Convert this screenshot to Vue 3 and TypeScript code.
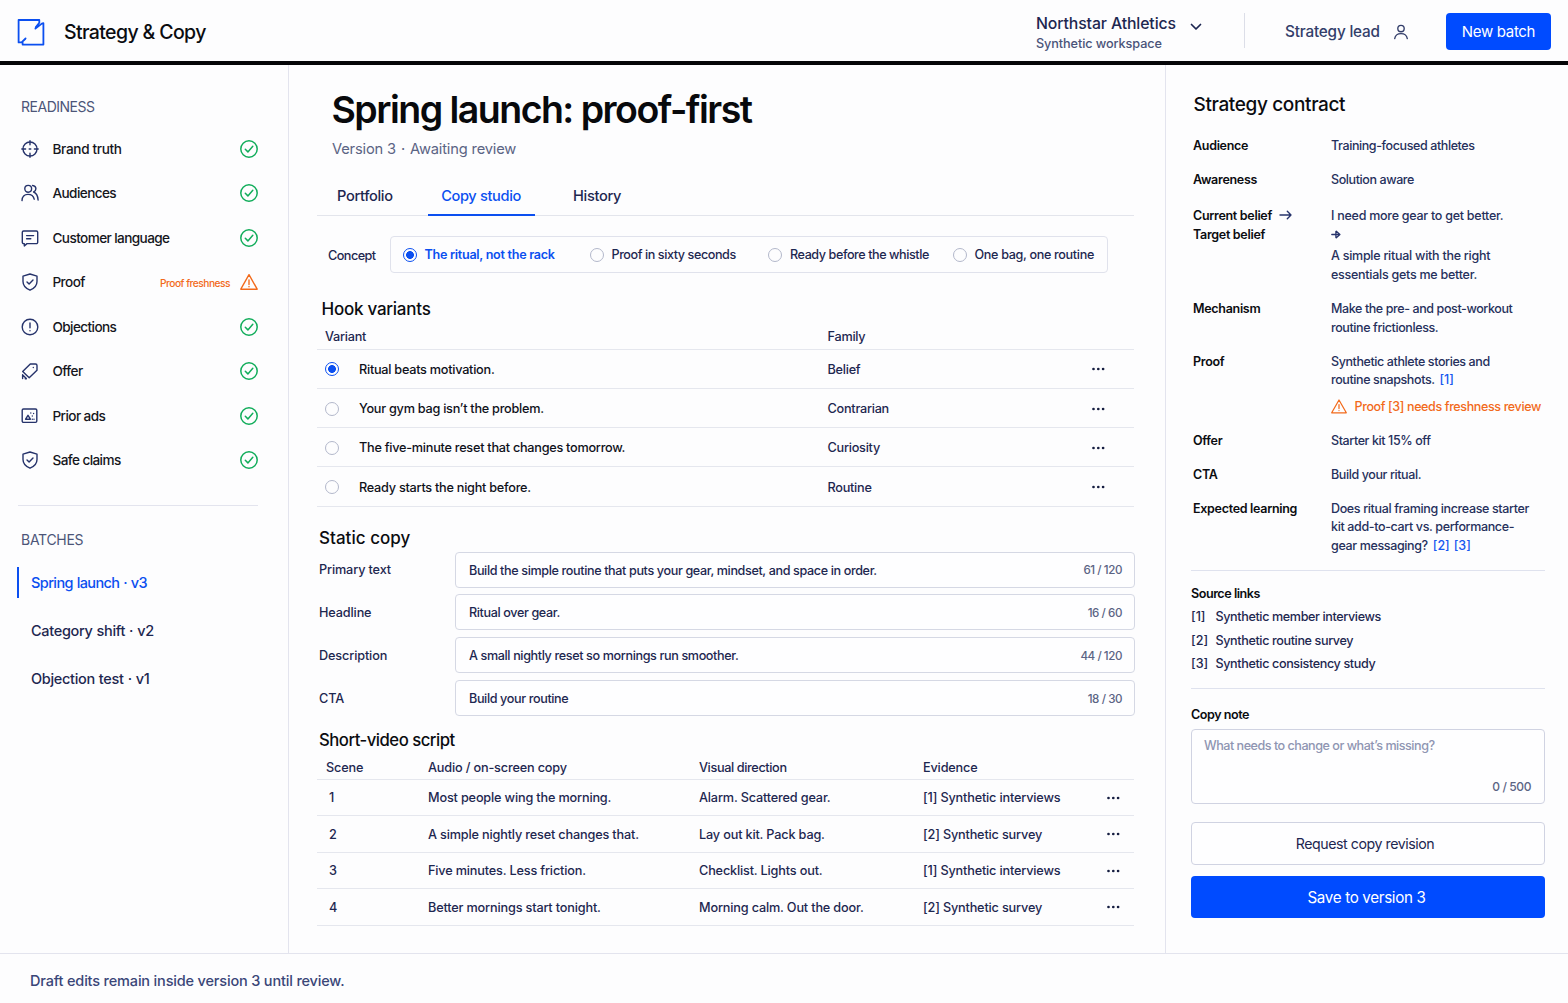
<script setup lang="ts">
import { ref } from 'vue'

interface ReadinessItem { label: string; icon: string; warning?: string; wide?: boolean }
interface Hook { text: string; family: string }

const readiness: ReadinessItem[] = [
  { label: 'Brand truth', icon: 'target', wide: true },
  { label: 'Audiences', icon: 'users' },
  { label: 'Customer language', icon: 'message' },
  { label: 'Proof', icon: 'shield', warning: 'Proof freshness' },
  { label: 'Objections', icon: 'alert' },
  { label: 'Offer', icon: 'tag' },
  { label: 'Prior ads', icon: 'image' },
  { label: 'Safe claims', icon: 'shield' },
]
const batches = ['Spring launch · v3', 'Category shift · v2', 'Objection test · v1']
const tabs = ['Portfolio', 'Copy studio', 'History']
const concepts = ['The ritual, not the rack', 'Proof in sixty seconds', 'Ready before the whistle', 'One bag, one routine']
const hooks: Hook[] = [
  { text: 'Ritual beats motivation.', family: 'Belief' },
  { text: 'Your gym bag isn’t the problem.', family: 'Contrarian' },
  { text: 'The five-minute reset that changes tomorrow.', family: 'Curiosity' },
  { text: 'Ready starts the night before.', family: 'Routine' },
]
const fields = [
  { label: 'Primary text', value: 'Build the simple routine that puts your gear, mindset, and space in order.', count: '61 / 120' },
  { label: 'Headline', value: 'Ritual over gear.', count: '16 / 60' },
  { label: 'Description', value: 'A small nightly reset so mornings run smoother.', count: '44 / 120' },
  { label: 'CTA', value: 'Build your routine', count: '18 / 30' },
]
const scenes = [
  { copy: 'Most people wing the morning.', visual: 'Alarm. Scattered gear.', evidence: '[1] Synthetic interviews' },
  { copy: 'A simple nightly reset changes that.', visual: 'Lay out kit. Pack bag.', evidence: '[2] Synthetic survey' },
  { copy: 'Five minutes. Less friction.', visual: 'Checklist. Lights out.', evidence: '[1] Synthetic interviews' },
  { copy: 'Better mornings start tonight.', visual: 'Morning calm. Out the door.', evidence: '[2] Synthetic survey' },
]
const sources = ['Synthetic member interviews', 'Synthetic routine survey', 'Synthetic consistency study']

const activeBatch = ref(0)
const activeTab = ref(1)
const concept = ref(0)
const hook = ref(0)
</script>

<template>
  <div class="app">
    <header class="topbar">
      <svg class="logo" width="28" height="28" viewBox="0 0 28 28" fill="none" stroke="#0b4ff0" stroke-width="1.8" stroke-linecap="round" stroke-linejoin="round">
        <path d="M22.3 4.800V2H1.600v22.400h3l4-4M5.600 24.500v2.100h20.800V5.200l-1.600.4-6.400 5M22.300 4.800l-3.600 4.600M4.600 24.400l3.600-3.300" />
      </svg>
      <div class="brand">Strategy &amp; Copy</div>
      <div class="workspace">
        <div>
          <div class="ws-name">Northstar Athletics</div>
          <div class="ws-sub">Synthetic workspace</div>
        </div>
        <svg width="12" height="8" viewBox="0 0 12 8" fill="none" stroke="#1b2550" stroke-width="1.7" stroke-linecap="round" stroke-linejoin="round"><path d="M1.5 1.5 6 6l4.500-4.500" /></svg>
      </div>
      <div class="role">
        <span>Strategy lead</span>
        <svg width="16" height="16" viewBox="0 0 16 16" fill="none" stroke="#333e6a" stroke-width="1.35" stroke-linecap="round"><circle cx="8" cy="4.500" r="3.200" /><path d="M1.700 14.600c.5-3.200 2.900-5 6.300-5s5.800 1.800 6.300 5" /></svg>
      </div>
      <button class="primary new">New batch</button>
    </header>

    <div class="body">
      <aside class="side">
        <h4>READINESS</h4>
        <ul class="ready">
          <li v-for="item in readiness" :key="item.label">
            <svg class="ico" width="18" height="18" viewBox="0 0 18 18" fill="none" stroke="#26336b" stroke-width="1.4" stroke-linecap="round" stroke-linejoin="round">
              <template v-if="item.icon === 'target'">
                <circle cx="9" cy="9" r="7" /><path d="M9 .8v4M9 13.200v4M.8 9h3.800M13.400 9h3.800M8.200 9h1.600" />
              </template>
              <template v-else-if="item.icon === 'users'">
                <circle cx="7.200" cy="4.800" r="3.400" /><path d="M1 16.600c.2-4 2.600-6.200 6-6.200s5.600 2 6.200 4.800M11.600 1.500c2.200.3 3.300 1.600 3.300 3.300 0 1.500-.9 2.700-2.300 3.200 2.500.9 4.200 3.600 4.500 8" />
              </template>
              <template v-else-if="item.icon === 'message'">
                <path d="M2.600 2h12.800a1.300 1.300 0 0 1 1.300 1.300v10a1.300 1.300 0 0 1-1.300 1.300H6L3.300 16.900v-2.300h-.7a1.300 1.300 0 0 1-1.300-1.300v-10A1.300 1.300 0 0 1 2.600 2zM5.600 6.600h7M5.600 9.800h4.200" />
              </template>
              <template v-else-if="item.icon === 'shield'">
                <path d="M9 1l7 2.200v5.300c0 4-2.600 6.900-7 8.700-4.400-1.800-7-4.700-7-8.700V3.200zM6 9l2.100 2.100 3.900-4" />
              </template>
              <template v-else-if="item.icon === 'alert'">
                <circle cx="9" cy="9" r="7.800" /><path d="M9 5v4.700M9 12.600v.2" />
              </template>
              <template v-else-if="item.icon === 'tag'">
                <path d="M1.700 9.600 9.300 2h5.200a1.500 1.500 0 0 1 1.500 1.500v4.700l-7.800 7.600zM12.300 5.500v.1M1.600 12.800v3.800M1.700 13l3.600 3.600M4.200 16.700h1.200" />
              </template>
              <template v-else>
                <rect x="1.200" y="2" width="14.600" height="13.400" rx="1.300" /><path d="M4.600 12.200 7 8.300l2.400 3.900zM11.300 9v.1M11.300 12.200v-.1M13 12.200v-.1M9.800 6v.1M12.600 6.500v.1" />
              </template>
            </svg>
            <span class="name" :class="{ wide: item.wide }">{{ item.label }}</span>
            <span v-if="item.warning" class="fresh">{{ item.warning }}</span>
            <svg v-if="item.warning" width="18" height="18" viewBox="0 0 18 18" fill="none" stroke="#f26a1b" stroke-width="1.35" stroke-linejoin="round" stroke-linecap="round"><path d="M9 1.600 17.200 16.200H.8zM9 6.800v4.600M9 13.500v.2" /></svg>
            <svg v-else width="18" height="18" viewBox="0 0 18 18" fill="none" stroke="#12ad5b" stroke-width="1.5" stroke-linecap="round" stroke-linejoin="round"><circle cx="9" cy="9" r="8.200" /><path d="M5.300 9.300 7.900 11.900 12.800 6.300" /></svg>
          </li>
        </ul>
        <h4 class="bt">BATCHES</h4>
        <ul class="batches">
          <li v-for="(b, i) in batches" :key="b" :class="{ on: i === activeBatch }" @click="activeBatch = i">{{ b }}</li>
        </ul>
      </aside>

      <main class="main">
        <h1>Spring launch: proof-first</h1>
        <p class="meta">Version 3 <i>·</i> Awaiting review</p>
        <nav class="tabs">
          <a v-for="(t, i) in tabs" :key="t" :class="{ on: i === activeTab }" @click="activeTab = i">{{ t }}</a>
        </nav>
        <div class="concept">
          <span class="clabel">Concept</span>
          <div class="options">
            <label v-for="(c, i) in concepts" :key="c" :class="{ on: i === concept }" @click="concept = i">
              <span class="radio" :class="{ on: i === concept }"></span>{{ c }}
            </label>
          </div>
        </div>

        <h2 class="h-hook">Hook variants</h2>
        <div class="hooks">
          <div class="row head"><span>Variant</span><span></span><span>Family</span></div>
          <div v-for="(h, i) in hooks" :key="h.text" class="row">
            <span class="radio" :class="{ on: i === hook }" @click="hook = i"></span>
            <span class="ink">{{ h.text }}</span>
            <span>{{ h.family }}</span>
            <svg class="dots" width="14" height="4" viewBox="0 0 14 4"><circle cx="2.500" cy="2" r="1.350" /><circle cx="7.300" cy="2" r="1.350" /><circle cx="12.100" cy="2" r="1.350" /></svg>
          </div>
        </div>

        <h2 class="h-static">Static copy</h2>
        <div class="fields">
          <template v-for="f in fields" :key="f.label">
            <span class="flabel">{{ f.label }}</span>
            <div class="field"><span>{{ f.value }}</span><span class="count">{{ f.count }}</span></div>
          </template>
        </div>

        <h2 class="h-script">Short-video script</h2>
        <div class="script">
          <div class="row head"><span>Scene</span><span>Audio / on-screen copy</span><span class="vd">Visual direction</span><span>Evidence</span></div>
          <div v-for="(s, i) in scenes" :key="s.copy" class="row">
            <span class="num">{{ i + 1 }}</span>
            <span>{{ s.copy }}</span>
            <span>{{ s.visual }}</span>
            <span>{{ s.evidence }}</span>
            <svg class="dots" width="14" height="4" viewBox="0 0 14 4"><circle cx="2.500" cy="2" r="1.350" /><circle cx="7.300" cy="2" r="1.350" /><circle cx="12.100" cy="2" r="1.350" /></svg>
          </div>
        </div>
      </main>

      <aside class="contract">
        <h3>Strategy contract</h3>
        <dl>
          <dt>Audience</dt><dd>Training-focused athletes</dd>
          <dt>Awareness</dt><dd>Solution aware</dd>
          <dt class="belief">Current belief
            <svg width="13" height="10" viewBox="0 0 13 10" fill="none" stroke="#26336b" stroke-width="1.4" stroke-linecap="round" stroke-linejoin="round"><path d="M1 5h11M8.300 1.300 12 5 8.300 8.700" /></svg>
            <br>Target belief</dt>
          <dd class="belief">
            <span class="loose">I need more gear to get better.</span><br>
            <svg class="arrow" width="10" height="9" viewBox="0 0 10 9" fill="none" stroke="#26336b" stroke-width="1.300" stroke-linecap="round" stroke-linejoin="round"><path d="M.8 4.500h8M5.300 1.200 8.900 4.500 5.300 7.800M4.900 1.500v6" /></svg>
            <div class="after">A simple ritual with the right<br>essentials gets me better.</div>
          </dd>
          <dt>Mechanism</dt><dd>Make the pre- and post-workout<br>routine frictionless.</dd>
          <dt>Proof</dt>
          <dd>Synthetic athlete stories and<br>routine snapshots. <a class="first">[1]</a>
            <div class="warn">
              <svg width="16" height="15" viewBox="0 0 16 15" fill="none" stroke="#f26a1b" stroke-width="1.250" stroke-linejoin="round" stroke-linecap="round"><path d="M8 1 15.300 13.800H.7zM8 5.600v4M8 11.500v.1" /></svg>
              Proof [3] needs freshness review
            </div>
          </dd>
          <dt>Offer</dt><dd>Starter kit 15% off</dd>
          <dt>CTA</dt><dd>Build your ritual.</dd>
          <dt>Expected learning</dt><dd class="learn">Does ritual framing increase starter<br>kit add-to-cart vs. performance-<br>gear messaging? <a>[2]</a> <a class="n">[3]</a></dd>
        </dl>
        <section class="sources">
          <h5>Source links</h5>
          <div v-for="(s, i) in sources" :key="s" class="src"><span>[{{ i + 1 }}]</span>{{ s }}</div>
        </section>
        <section class="note">
          <h5>Copy note</h5>
          <div class="area">
            <span>What needs to change or what’s missing?</span>
            <span class="limit">0 / 500</span>
          </div>
          <button class="secondary">Request copy revision</button>
          <button class="primary save">Save to version 3</button>
        </section>
      </aside>
    </div>

    <footer>Draft edits remain inside version 3 until review.</footer>
  </div>
</template>

<style>
body { background: #fdfdfe; }
</style>

<style scoped>
* { box-sizing: border-box; margin: 0; padding: 0; }
.app { width: 1568px; height: 1003px; display: flex; flex-direction: column; overflow: hidden; font-family: Inter, "Liberation Sans", sans-serif; font-size: 12.7px; font-weight: 450; color: #1d2750; background: #fdfdfe; }
svg { flex: none; display: block; }
ul { list-style: none; }
button { font-family: inherit; border-radius: 4px; border: 0; font-weight: 430; }
.primary { background: #004bff; color: #fff; }

.topbar { height: 65px; flex: none; border-bottom: 4px solid #050608; display: flex; align-items: center; padding: 2px 17px 0 17px; }
.brand { margin-left: 19px; width: 972px; font-size: 19.5px; font-weight: 450; letter-spacing: -.62px; color: #0b0c10; white-space: nowrap; }
.workspace { display: flex; width: 209px; height: 35px; border-right: 1px solid #dcdee8; gap: 15px; margin-top: -2px; }
.ws-name { font-size: 15.800px; line-height: 20px; letter-spacing: -.11px; margin-top: 1px; white-space: nowrap; }
.ws-sub { font-size: 12.700px; line-height: 18px; margin-top: 1px; letter-spacing: -.1px; color: #4a5379; white-space: nowrap; }
.workspace svg { margin: 10px 0 0 -.5px; }
.role { display: flex; align-items: center; gap: 13px; margin-left: 40px; width: 161px; font-size: 15.300px; letter-spacing: -.18px; color: #333e6a; }
.new { width: 105px; height: 37px; font-size: 15px; letter-spacing: -.33px; flex: none; }

.body { flex: none; height: 888px; display: grid; grid-template-columns: 289px 877px 402px; }
.side { border-right: 1px solid #e3e4ee; padding: 31px 30px 0 17px; }
h4 { font-size: 14px; line-height: 22px; font-weight: 400; letter-spacing: -.48px; color: #4c5578; padding-left: 4px; }
.ready { margin: 8.500px 0 0 1px; padding: 0 0 22px 2.500px; border-bottom: 1px solid #e3e4ee; }
.ready li { height: 44.500px; display: flex; align-items: center; color: #15161c; font-size: 13.600px; }
.name { margin-left: 14px; flex: 1; letter-spacing: -.6px; }
.name.wide { letter-spacing: -.34px; }
.fresh { font-size: 10.200px; font-weight: 550; letter-spacing: -.5px; color: #f26a1b; margin-right: 10px; padding-top: 1px; }
.bt { margin-top: 23px; letter-spacing: -.28px; }
.batches { padding-top: 16px; }
.batches li { height: 48.200px; display: flex; align-items: center; padding-left: 14px; font-size: 14.500px; letter-spacing: -.32px; word-spacing: .5px; }
.batches li.on { color: #0b4ff0; height: 31px; margin-bottom: 8.500px; border-left: 2px solid #0b4ff0; padding-left: 12px; letter-spacing: -.6px; }

.main { padding: 0 31px 0 28px; border-right: 1px solid #e3e4ee; }
h1 { font-size: 37.500px; line-height: 46px; font-weight: 580; letter-spacing: -1.530px; color: #08090c; margin: 22px 0 0 14.500px; white-space: nowrap; }
.meta { font-size: 14.700px; line-height: 20px; font-weight: 400; letter-spacing: -.17px; color: #5b6484; margin: 6px 0 0 15px; }
.meta i { font-style: normal; margin: 0 1px; }
.tabs { display: flex; margin-top: 17px; height: 40px; border-bottom: 1px solid #e3e5ec; font-size: 14.600px; letter-spacing: -.34px; }
.tabs a { height: 40px; line-height: 41px; padding: 0 13.500px; margin-left: 21.500px; }
.tabs a:first-child { margin-left: 6.500px; }
.tabs a:last-child { margin-left: 25px; }
.tabs a.on { color: #0b4ff0; border-bottom: 2.500px solid #0b4ff0; }
.concept { display: flex; align-items: center; margin-top: 20px; padding-left: 11px; height: 37px; }
.clabel { width: 62px; letter-spacing: -.57px; padding-top: 1px; }
.options { width: 718px; height: 37px; border: 1px solid #e0e2ec; border-radius: 4px; display: flex; align-items: center; padding: .5px 0 0 12px; font-size: 12.600px; letter-spacing: -.43px; white-space: nowrap; }
.options label { display: flex; align-items: center; gap: 8px; }
.options label:nth-child(1) { width: 186.500px; }
.options label:nth-child(2) { width: 178.500px; }
.options label:nth-child(3) { width: 184.500px; }
.options label:nth-child(4) { letter-spacing: -.33px; }
.options label.on { color: #0b4ff0; font-weight: 600; letter-spacing: -.29px; gap: 7.500px; }
.radio { width: 14px; height: 14px; border-radius: 50%; border: 1.300px solid #b3b8cb; display: block; flex: none; }
.radio.on { border-color: #0b4ff0; background: radial-gradient(circle, #0b4ff0 3.600px, transparent 4.200px); }

h2 { font-weight: 450; font-size: 17px; line-height: 24px; color: #0b0c10; white-space: nowrap; }
.h-hook { margin: 24px 0 0 4.500px; letter-spacing: -.25px; }
.h-static { margin: 19.500px 0 0 2px; letter-spacing: .03px; }
.h-script { margin: 11.500px 0 0 2px; font-size: 16.700px; letter-spacing: -.5px; }
.row { display: grid; align-items: center; border-bottom: 1px solid #e5e7ee; width: 817px; white-space: nowrap; }
.hooks .row { grid-template-columns: 34px 468.500px 263.500px 20px; height: 39.250px; padding: 1.500px 0 0 8px; letter-spacing: -.26px; }
.hooks .row.head { height: 28.500px; padding-top: 3px; }
.hooks .ink { color: #0f111a; }
.dots { fill: #151d40; }
.fields { display: grid; grid-template-columns: 135.500px 680.500px; grid-auto-rows: 36px; row-gap: 6.850px; margin: 1.500px 0 0 2px; align-items: center; }
.flabel { letter-spacing: -.14px; }
.field { height: 36px; border: 1px solid #d5d8e4; border-radius: 4px; display: flex; align-items: center; justify-content: space-between; padding: 1px 12px 0 13.500px; font-size: 12.600px; letter-spacing: -.37px; background: #fefeff; }
.count { font-size: 11.600px; letter-spacing: -.44px; color: #5b6484; }
.script .row { grid-template-columns: 102px 271px 224px 183px 20px; height: 36.400px; padding: .5px 0 0 9px; letter-spacing: -.17px; }
.script .row.head { height: 28.500px; padding-top: 3.500px; }
.num { padding-left: 3px; }
.vd { letter-spacing: -.38px; }

.contract { padding: 27px 23px 0 25px; }
h3 { font-weight: 450; font-size: 19px; line-height: 26px; letter-spacing: -.36px; color: #0b0c10; padding-left: 2.500px; }
dl { display: grid; grid-template-columns: 138px 1fr; row-gap: 15.600px; margin-top: 19.300px; padding: 0 0 15px 2px; font-size: 12.500px; line-height: 18.500px; letter-spacing: -.4px; white-space: nowrap; border-bottom: 1px solid #dfe2ee; }
dt, h5 { font-weight: 600; color: #0b0c10; letter-spacing: -.3px; }
dt.belief, dd.belief { margin-top: 2px; }
dt svg { display: inline-block; margin-left: 4.500px; }
dd { color: #26305c; }
.loose { letter-spacing: -.26px; }
.arrow { display: inline-block; }
.after { margin-top: 3px; letter-spacing: -.26px; }
dd a { color: #1558f0; margin-left: 2px; letter-spacing: 0; }
dd a.first { margin-left: 2px; }
dd a.n { margin-left: 1px; }
.learn { letter-spacing: -.36px; }
.warn { display: flex; align-items: center; gap: 7.500px; color: #f26a1b; margin-top: 8px; letter-spacing: -.37px; }
.sources { height: 118px; border-bottom: 1px solid #dfe2ee; padding-top: 12.500px; }
h5 { font-size: 12.600px; line-height: 20px; letter-spacing: -.48px; }
.src { line-height: 23.500px; font-size: 12.600px; letter-spacing: -.38px; }
.sources h5 { margin-bottom: 1.500px; }
.src span { display: inline-block; width: 24.500px; letter-spacing: 0; }
.note { padding-top: 16px; }
.area { margin-top: 4px; width: 354px; height: 75px; border: 1px solid #d0d3e2; border-radius: 4px; padding: 7px 13px 7px 12px; display: flex; flex-direction: column; justify-content: space-between; color: #8f95b2; font-size: 12.600px; line-height: 18px; letter-spacing: -.49px; background: #fefeff; }
.limit { align-self: flex-end; font-size: 12px; letter-spacing: -.4px; color: #5b6484; }
.secondary { display: block; width: 354px; height: 43px; margin-top: 18px; border: 1px solid #d0d3e2; background: #fefeff; color: #1d2750; font-size: 14.200px; letter-spacing: -.46px; padding-right: 6px; }
.save { display: block; width: 354px; height: 42px; margin-top: 11px; font-size: 15.200px; letter-spacing: -.34px; padding: 1px 3px 0 0; }
footer { height: 50px; flex: none; border-top: 1px solid #e3e4ee; padding: 4.500px 0 0 30px; display: flex; align-items: center; font-size: 14.500px; letter-spacing: -.17px; color: #3a4678; }
</style>
